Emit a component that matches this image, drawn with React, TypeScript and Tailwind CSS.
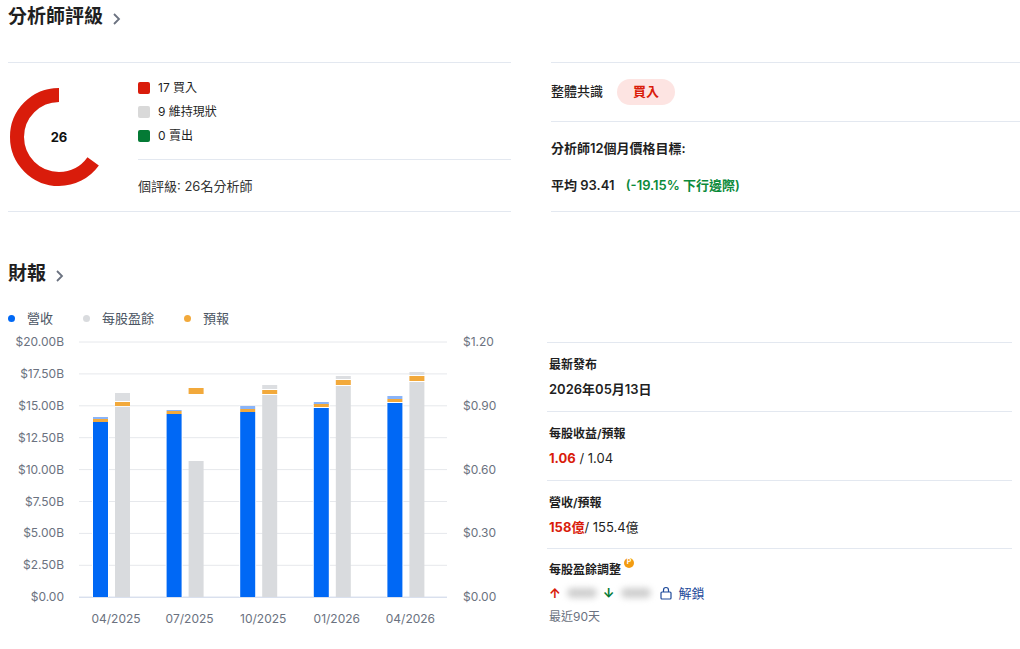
const font = { fontFamily: '"Inter", "Noto Sans CJK TC", sans-serif' };

function Chevron() {
  return (
    <svg width="12" height="14" viewBox="0 0 12 14" className="ml-2 mt-1">
      <path d="M3 2l5 5-5 5" fill="none" stroke="#6b7280" strokeWidth="1.8" />
    </svg>
  );
}

function Donut() {
  const r = 42;
  const c = 2 * Math.PI * r;
  const buy = (17 / 26) * c;
  return (
    <svg width="102" height="102" viewBox="0 0 102 102">
      <circle cx="51" cy="51" r={r} fill="none" stroke="#d9d9d9" strokeWidth="14" strokeDasharray={`${c - buy - 2} ${c}`} strokeDashoffset={-buy - 1} transform="rotate(-90 51 51)" />
      <circle cx="51" cy="51" r={r} fill="none" stroke="#d91c0b" strokeWidth="14" strokeDasharray={`${buy - 1} ${c}`} transform="scale(-1 1) translate(-102 0) rotate(-90 51 51)" />
      <text x="51" y="56" textAnchor="middle" fontSize="13" fontWeight="700" fill="#111" style={font}>26</text>
    </svg>
  );
}

const groups = [
  { label: "04/2025", blue: 443, bcap: [438, 441], bor: [440, 443], gray: 428, gcap: 414, gor: [423, 427] },
  { label: "07/2025", blue: 435, bcap: [431, 432], bor: [432, 435], gray: 482, gcap: null, gor: [409, 415] },
  { label: "10/2025", blue: 433, bcap: [427, 430], bor: [430, 433], gray: 416, gcap: 406, gor: [411, 415] },
  { label: "01/2026", blue: 429, bcap: [423, 426], bor: [425, 428], gray: 407, gcap: 397, gor: [401, 406] },
  { label: "04/2026", blue: 424, bcap: [417, 420], bor: [420, 423], gray: 403, gcap: 393, gor: [397, 402] },
];

function Chart() {
  const oy = 340;
  const left = ["$20.00B", "$17.50B", "$15.00B", "$12.50B", "$10.00B", "$7.50B", "$5.00B", "$2.50B", "$0.00"];
  const right = ["$1.20", "$0.90", "$0.60", "$0.30", "$0.00"];
  return (
    <svg width="510" height="309" viewBox="0 340 510 309" style={font}>
      {left.map((l, i) => {
        const y = 363 + i * 31.9;
        return (
          <g key={l}>
            <line x1="79" x2="447" y1={y} y2={y} stroke={i === 8 ? "#c8d3e6" : "#e6e8ec"} strokeWidth="1" />
            <text x="64" y={y + 4} textAnchor="end" fontSize="12" fill="#6b7280">{l}</text>
          </g>
        );
      })}
      {right.map((l, i) => (
        <text key={l} x="463" y={363 + i * 63.8 + 4} fontSize="12" fill="#6b7280">{l}</text>
      ))}
      {groups.map((g, i) => {
        const x = 93 + i * 73.6;
        return (
          <g key={g.label}>
            <rect x={x - 1} y={g.bcap[0]} width="17" height={618 - g.bcap[0]} fill="#fff" />
            <rect x={x} y={g.bcap[0]} width="15" height={g.bcap[1] - g.bcap[0]} fill="#8ab4f8" />
            <rect x={x} y={g.bor[0]} width="15" height={g.bor[1] - g.bor[0]} fill="#f2a93b" />
            <rect x={x} y={g.blue} width="15" height={618 - g.blue} fill="#0068f5" />
            {g.gcap && <rect x={x + 22} y={g.gcap} width="15" height={g.gor[0] - g.gcap - 1} fill="#dcdee1" />}
            <rect x={x + 22} y={g.gor[0]} width="15" height={g.gor[1] - g.gor[0]} fill="#f2a93b" />
            <rect x={x + 22} y={g.gray} width="15" height={618 - g.gray} fill="#d9dbde" />
            <text x={x + 23} y="644" textAnchor="middle" fontSize="12" fill="#6b7280">{g.label}</text>
          </g>
        );
      })}
      <rect x="0" y={oy} width="1" height="1" fill="none" />
    </svg>
  );
}

export default function App() {
  return (
    <div className="w-[1020px] h-[649px] overflow-hidden bg-white text-[#1f1f1f] pl-2" style={font}>
      <div className="flex items-center h-[34px]">
        <h2 className="text-[19px] font-bold">分析師評級</h2>
        <Chevron />
      </div>
      <div className="flex mt-[28px]">
        <div className="w-[503px] border-t border-b border-[#e3e8f0] flex h-[150px]">
          <div className="pt-[23px]"><Donut /></div>
          <div className="ml-[28px] flex-1 flex flex-col">
            <div className="pt-[16px] flex flex-col gap-[6px] text-[12px] h-[96px]">
              <div className="flex items-center gap-2"><span className="w-[12px] h-[12px] rounded-[2px] bg-[#d91c0b]" />17 買入</div>
              <div className="flex items-center gap-2"><span className="w-[12px] h-[12px] rounded-[2px] bg-[#d9d9d9]" />9 維持現狀</div>
              <div className="flex items-center gap-2"><span className="w-[12px] h-[12px] rounded-[2px] bg-[#047a35]" />0 賣出</div>
            </div>
            <div className="border-t border-[#e3e8f0] pt-[17px] text-[13px] text-[#333]">個評級:  26名分析師</div>
          </div>
        </div>
        <div className="ml-[40px] w-[469px] border-t border-b border-[#e3e8f0] h-[150px]">
          <div className="h-[59px] flex items-center border-b border-[#e3e8f0] text-[13px] font-medium">
            整體共識
            <span className="ml-[14px] bg-[#fde4e2] text-[#d91c0b] rounded-full px-4 py-[3px] text-[13px] font-bold">買入</span>
          </div>
          <div className="pt-[17px] text-[13px] font-semibold">分析師12個月價格目標:</div>
          <div className="pt-[17px] text-[13px] font-semibold">平均 93.41 <span className="ml-2 text-[#0a8a3a]">(-19.15% 下行邊際)</span></div>
        </div>
      </div>
      <div className="flex items-center mt-[48px] h-[28px]">
        <h2 className="text-[19px] font-bold">財報</h2>
        <Chevron />
      </div>
      <div className="flex items-center gap-[30px] text-[13px] text-[#4b5563] mt-[21px]">
        <span className="flex items-center gap-[12px]"><span className="w-[7px] h-[7px] rounded-full bg-[#0068f5]" />營收</span>
        <span className="flex items-center gap-[12px]"><span className="w-[7px] h-[7px] rounded-full bg-[#d9dbde]" />每股盈餘</span>
        <span className="flex items-center gap-[12px]"><span className="w-[7px] h-[7px] rounded-full bg-[#f2a93b]" />預報</span>
      </div>
      <div className="flex -mt-[0px]">
        <div className="-ml-2 mt-[-10px]"><Chart /></div>
        <div className="ml-[37px] mt-[13px] w-[465px] text-[12px]">
          <div className="border-t border-[#e3e8f0] h-[69px] pt-[13px] pl-[2px]">
            <div className="font-semibold">最新發布</div>
            <div className="mt-[6px] text-[13px] font-semibold">2026年05月13日</div>
          </div>
          <div className="border-t border-[#e3e8f0] h-[69px] pt-[13px] pl-[2px]">
            <div className="font-semibold">每股收益/預報</div>
            <div className="mt-[6px] text-[13px]"><span className="text-[#d91c0b] font-bold">1.06</span> / 1.04</div>
          </div>
          <div className="border-t border-[#e3e8f0] h-[68px] pt-[13px] pl-[2px]">
            <div className="font-semibold">營收/預報</div>
            <div className="mt-[6px] text-[13px]"><span className="text-[#d91c0b] font-bold">158億</span>/ 155.4億</div>
          </div>
          <div className="border-t border-[#e3e8f0] pt-[12px] pl-[2px]">
            <div className="font-semibold flex items-start">每股盈餘調整<span className="ml-[3px] -mt-[3px] w-[10px] h-[10px] rounded-full bg-[#f39c12] text-white text-[7px] font-bold flex items-center justify-center">P</span></div>
            <div className="mt-[5px] flex items-center text-[13px]">
              <span className="text-[#d91c0b] font-bold">↑</span>
              <span className="mx-[6px] w-[30px] h-[10px] rounded-full bg-[#cfcfcf] blur-[3px]" />
              <span className="text-[#047a35] font-bold">↓</span>
              <span className="mx-[6px] w-[30px] h-[10px] rounded-full bg-[#cfcfcf] blur-[3px]" />
              <svg width="14" height="14" viewBox="0 0 14 14" className="ml-[2px]"><rect x="2" y="6" width="10" height="7" rx="1" fill="none" stroke="#1e4a9a" strokeWidth="1.2" /><path d="M4.5 6V4a2.5 2.5 0 015 0v2" fill="none" stroke="#1e4a9a" strokeWidth="1.2" /></svg>
              <span className="ml-[6px] text-[#1e4a9a]">解鎖</span>
            </div>
            <div className="mt-[5px] text-[#6b7280]">最近90天</div>
          </div>
        </div>
      </div>
    </div>
  );
}
